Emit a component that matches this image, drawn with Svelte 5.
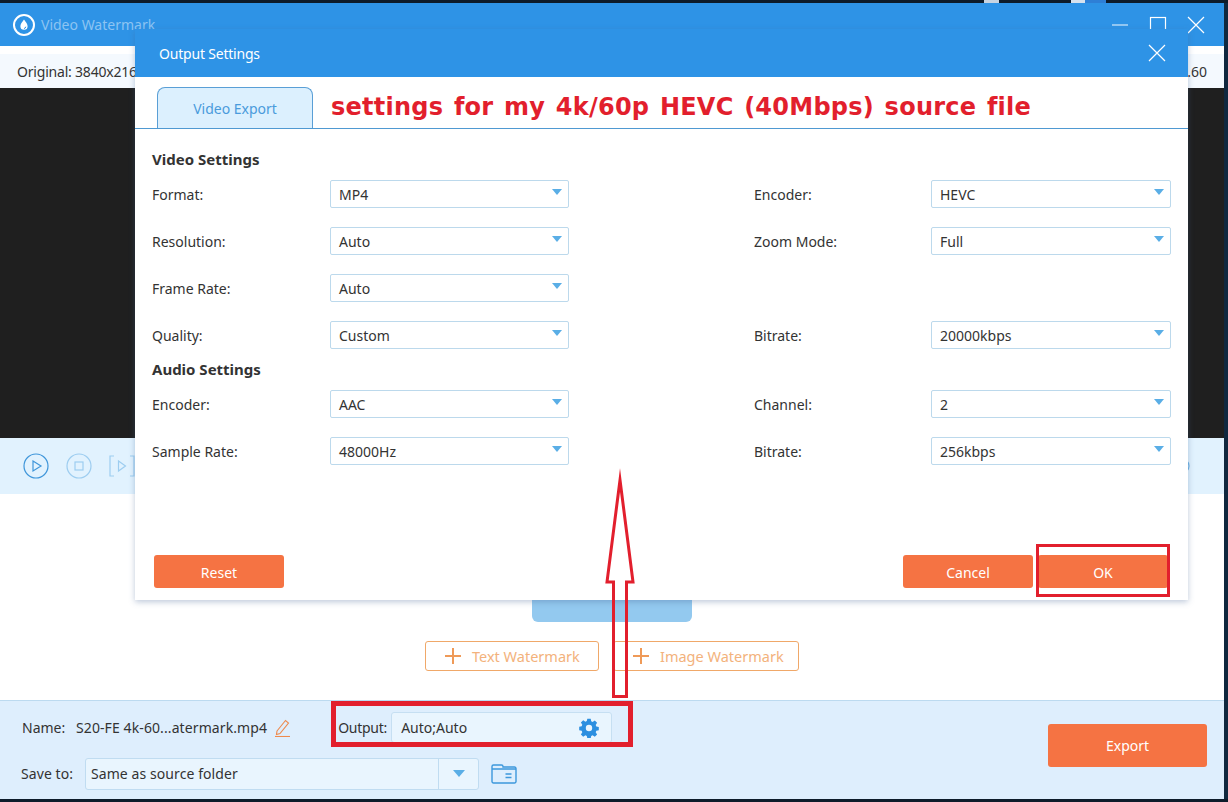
<script>
  const videoRows = [
    { l: 'Format:', v: 'MP4', l2: 'Encoder:', v2: 'HEVC' },
    { l: 'Resolution:', v: 'Auto', l2: 'Zoom Mode:', v2: 'Full' },
    { l: 'Frame Rate:', v: 'Auto' },
    { l: 'Quality:', v: 'Custom', l2: 'Bitrate:', v2: '20000kbps' }
  ];
  const audioRows = [
    { l: 'Encoder:', v: 'AAC', l2: 'Channel:', v2: '2' },
    { l: 'Sample Rate:', v: '48000Hz', l2: 'Bitrate:', v2: '256kbps' }
  ];
</script>

{#snippet row(r)}
  <div class="row">
    <span class="lbl">{r.l}</span>
    <div class="sel"><span>{r.v}</span><i class="tri"></i></div>
    {#if r.l2}
      <span class="lbl second">{r.l2}</span>
      <div class="sel wide"><span>{r.v2}</span><i class="tri"></i></div>
    {/if}
  </div>
{/snippet}

{#snippet plus()}
  <svg class="plus" width="16" height="16" viewBox="0 0 16 16"><path d="M8 0v16M0 8h16" stroke="#ef9a58" stroke-width="2"/></svg>
{/snippet}

<div class="page">
  <div class="strip"><b class="bit a"></b><b class="bit b"></b></div>
  <main class="win">
    <header class="title">
      <svg class="logo" viewBox="0 0 24 24" width="24" height="24" fill="none">
        <circle cx="12" cy="12" r="10" stroke="#fff" stroke-width="2"/>
        <path d="M12 6.5c2 2.7 3.6 4.6 3.6 6.7a3.6 3.6 0 0 1-7.2 0c0-2.1 1.600-4 3.600-6.700z" fill="#fff"/>
        <path d="M12 15.500a2 2 0 0 0 1.800-1.800" stroke="#2e93e6" stroke-width="1"/>
      </svg>
      <span class="appname">Video Watermark</span>
      <div class="winbtns">
        <svg width="18" height="18" viewBox="0 0 18 18"><path d="M1 9h16" stroke="#fff" stroke-width="1.200" opacity=".8"/></svg>
        <svg width="18" height="18" viewBox="0 0 18 18"><rect x="1.500" y="1.500" width="15" height="15" fill="none" stroke="#fff" stroke-width="1.200"/></svg>
        <svg width="18" height="18" viewBox="0 0 18 18"><path d="M1 1l16 16M17 1L1 17" stroke="#fff" stroke-width="1.200"/></svg>
      </div>
    </header>
    <div class="info"><div class="infoin"><span class="orig">Original: 3840x2160</span><span>.60</span></div></div>
    <div class="video"></div>
    <div class="controls">
      <svg width="26" height="26" viewBox="0 0 26 26" fill="none" stroke="#3f96da" stroke-width="1.200"><circle cx="13" cy="13" r="12"/><path d="M10 8l8 5-8 5z"/></svg>
      <svg width="26" height="26" viewBox="0 0 26 26" fill="none" stroke="#9dcdf0" stroke-width="1.200"><circle cx="13" cy="13" r="12"/><rect x="9" y="9" width="8" height="8"/></svg>
      <svg width="26" height="22" viewBox="0 0 26 22" fill="none" stroke="#9dcdf0" stroke-width="1.200"><path d="M5 1H1v20h4M21 1h4v20h-4M9.500 6l7 5-7 5z"/></svg>
      <svg class="vol" width="20" height="20" viewBox="0 0 20 20" fill="none" stroke="#6fb3e6" stroke-width="1.200"><circle cx="10" cy="10" r="8"/></svg>
    </div>
    <div class="canvas">
      <div class="addbar"></div>
      <div class="wmbtns">
        <div class="wm t">{@render plus()}Text Watermark</div>
        <div class="wm i">{@render plus()}Image Watermark</div>
      </div>
    </div>
    <footer class="foot">
      <div class="fleft">
        <div class="fl1">
          <span class="nm">Name:</span><span class="fname">S20-FE 4k-60...atermark.mp4</span>
          <svg class="pen" width="17" height="18" viewBox="0 0 17 18" fill="none" stroke="#ee8a4e" stroke-width="1.100"><path d="M3 12L11.500 1.500l3 2.500L6 14.500l-3.500 1z"/><path d="M1 17.500h15"/></svg>
          <span class="outl">Output:</span>
          <div class="outbox">
            <span>Auto;Auto</span>
            <svg width="20" height="20" viewBox="0 0 20 20"><path fill="#2c8fe0" fill-rule="evenodd" d="M8.300.800h3.400l.5 2.500 1.400.6 2.200-1.400 2.300 2.300-1.400 2.200.6 1.400 2.500.5v3.400l-2.500.5-.6 1.400 1.400 2.200-2.300 2.300-2.200-1.400-1.400.6-.5 2.500H8.300l-.5-2.500-1.400-.6-2.200 1.400-2.300-2.300 1.400-2.200-.6-1.400-2.500-.5V8.700l2.500-.5.6-1.400L1.900 4.600l2.300-2.300 2.200 1.400 1.400-.6zM10 6.800a3.200 3.200 0 1 0 0 6.400 3.200 3.200 0 0 0 0-6.400z"/></svg>
          </div>
        </div>
        <div class="fl2">
          <span class="nm">Save to:</span>
          <div class="savebox"><span>Same as source folder</span><div class="savearrow"><i class="tri big"></i></div></div>
          <svg class="folder" width="26" height="20" viewBox="0 0 26 20" fill="none" stroke="#3d98dc" stroke-width="1.400"><path d="M1 4V2.500A1.500 1.500 0 0 1 2.500 1h8A1.500 1.500 0 0 1 12 2.500V3h11.500A1.500 1.500 0 0 1 25 4.500V17.500a1.500 1.500 0 0 1-1.500 1.500h-21A1.500 1.500 0 0 1 1 17.500z"/><path d="M1 5h24M14.500 10h6M14.500 13.500h6"/></svg>
        </div>
      </div>
      <div class="export">Export</div>
    </footer>
  </main>
  <div class="strip bottom"></div>

  <section class="dialog">
    <header class="dhead">
      <span>Output Settings</span>
      <svg width="18" height="18" viewBox="0 0 18 18"><path d="M1 1l16 16M17 1L1 17" stroke="#fff" stroke-width="1.200"/></svg>
    </header>
    <div class="tabs">
      <div class="tab">Video Export</div>
      <div class="note">settings for my 4k/60p HEVC (40Mbps) source file</div>
    </div>
    <div class="body">
      <h3 class="h1">Video Settings</h3>
      {#each videoRows as r}{@render row(r)}{/each}
      <h3 class="h2">Audio Settings</h3>
      {#each audioRows as r}{@render row(r)}{/each}
    </div>
    <div class="actions">
      <div class="btn">Reset</div>
      <div class="spacer"></div>
      <div class="btn">Cancel</div>
      <div class="btn ok">OK</div>
    </div>
  </section>

  <div class="mark okmark"></div>
  <div class="mark outmark"></div>
  <svg class="arrow" width="40" height="240" viewBox="0 0 40 240" fill="none">
    <path d="M20 16L33 118H26.500V232.500H13.500V118H7z" stroke="#e21f2d" stroke-width="3" stroke-miterlimit="20"/>
  </svg>
</div>

<style>
  :global(body) { margin: 0; background: #0f2a44; }
  .page {
    position: relative; width: 1228px; height: 802px; overflow: hidden;
    display: flex; flex-direction: column;
    font-family: "Noto Sans", "DejaVu Sans", sans-serif; font-size: 14px; color: #333;
    background: #10283f;
  }
  .strip { height: 3px; background: #0d1b2a; position: relative; flex: none; }
  .bit { position: absolute; top: 0; height: 3px; background: #c7d4e2; }
  .bit.a { left: 984px; width: 15px; }
  .bit.b { left: 1071px; width: 35px; background: linear-gradient(90deg, #d7e2ee 40%, #2e7fd6 40%); }
  .win { width: 1224px; flex: 1; display: flex; flex-direction: column; background: #fff; }
  .title { height: 43px; background: #2e93e6; display: flex; align-items: center; padding: 0 19px 0 12px; flex: none; }
  .logo { margin-right: 5px; }
  .appname { color: #8cc4f2; font-size: 14px; }
  .winbtns { margin-left: auto; display: flex; gap: 20px; }
  .info { height: 42px; background: #fff; padding-top: 8px; box-sizing: border-box; flex: none; }
  .infoin { height: 34px; background: #f4f9fe; display: flex; justify-content: space-between; align-items: center; padding: 0 17px; color: #333; }
  .orig { letter-spacing: -.2px; }
  .video { height: 350px; background: #1f1f1f; flex: none; }
  .controls { height: 56px; background: #e1f2fe; display: flex; align-items: center; gap: 17px; padding: 0 33px 0 23px; flex: none; }
  .vol { margin-left: auto; }
  .canvas { flex: 1; background: #fff; display: flex; flex-direction: column; align-items: center; }
  .addbar { width: 160px; height: 128px; background: #93c9ef; border-radius: 0 0 6px 6px; flex: none; }
  .wmbtns { display: flex; gap: 14px; margin-top: 19px; }
  .wm { height: 28px; border: 1px solid #f0a869; border-radius: 3px; display: flex; align-items: center; color: #f3b27c; font-size: 14.500px; }
  .wm.t { width: 172px; }
  .wm.i { width: 184px; }
  .plus { margin: 0 11px 0 19px; flex: none; }
  .foot { height: 99px; background: #deeefd; border-top: 1px solid #bcdaf0; display: flex; box-sizing: border-box; flex: none; }
  .fleft { flex: 1; padding: 10px 0 0 21px; }
  .fl1 { display: flex; align-items: center; height: 33px; }
  .fl2 { display: flex; align-items: center; height: 33px; margin-top: 13px; letter-spacing: .08px; }
  .nm { width: 55px; }
  .fl1 .nm { margin-left: 1px; width: 54px; }
  .fname { margin-right: 7px; letter-spacing: .1px; }
  .pen { margin-right: 47px; flex: none; }
  .outl { width: 48px; margin-right: 5px; letter-spacing: -.25px; white-space: nowrap; }
  .outbox { width: 221px; height: 31px; border: 1px solid #c6dff2; border-radius: 3px; background: #e9f5fe; display: flex; align-items: center; justify-content: space-between; padding: 0 12px 0 9px; box-sizing: border-box; flex: none; }
  .savebox { width: 394px; height: 32px; margin-left: 9px; border: 1px solid #c0dcf1; border-radius: 3px; background: #e9f5fe; display: flex; align-items: center; padding-left: 5px; box-sizing: border-box; justify-content: space-between; }
  .savearrow { width: 39px; height: 100%; border-left: 1px solid #c0dcf1; display: flex; align-items: center; justify-content: center; }
  .folder { margin-left: 12px; }
  .export { width: 159px; height: 43px; background: #f57343; color: #fff; border-radius: 3px; display: flex; align-items: center; justify-content: center; margin: 23px 17px 0 0; }
  .dialog {
    position: absolute; left: 135px; top: 29px; width: 1053px; height: 571px;
    background: #fff; box-shadow: 0 2px 6px rgba(70,100,150,.35);
    display: flex; flex-direction: column;
  }
  .dhead { height: 48px; background: #2e93e6; color: #fff; display: flex; align-items: center; justify-content: space-between; padding: 0 22px 0 24px; flex: none; letter-spacing: -.2px; }
  .tabs { height: 52px; border-bottom: 1px solid #4f99d2; display: flex; align-items: flex-end; padding-left: 22px; box-sizing: border-box; flex: none; }
  .tab { width: 156px; height: 41px; box-sizing: border-box; border: 1px solid #5a9fd6; border-bottom: none; border-radius: 8px 8px 0 0; background: #dcf0fe; color: #4a9bdc; display: flex; align-items: center; justify-content: center; }
  .note { font-family: "DejaVu Sans", sans-serif; font-weight: 700; font-size: 24px; color: #e21f2d; margin: 0 0 7px 18px; white-space: nowrap; word-spacing: 2px; letter-spacing: .25px; }
  .body { padding: 20px 17px 0; flex: none; }
  h3 { margin: 0; font-size: 15px; font-weight: 700; color: #333; line-height: 20px; }
  .h1 { margin-bottom: 11px; }
  .h2 { margin-top: -9px; margin-bottom: 11px; }
  .row { display: flex; align-items: center; height: 28px; margin-bottom: 19px; }
  .row:last-child { margin-bottom: 0; }
  .lbl { width: 178px; flex: none; }
  .lbl.second { width: 177px; margin-left: 185px; }
  .sel { width: 239px; height: 28px; box-sizing: border-box; border: 1px solid #bcd9ec; border-radius: 2px; display: flex; justify-content: space-between; padding: 0 6px 0 8px; align-items: center; flex: none; }
  .sel.wide { width: 240px; }
  .tri { width: 0; height: 0; border-left: 5.500px solid transparent; border-right: 5.500px solid transparent; border-top: 6px solid #5aaee6; margin-top: -4px; }
  .tri.big { margin-top: 0; border-left-width: 6.500px; border-right-width: 6.500px; border-top-width: 7px; }
  .actions { margin-top: auto; height: 33px; padding: 0 20px 12px 19px; display: flex; gap: 5px; flex: none; }
  .spacer { flex: 1; }
  .btn { width: 130px; height: 33px; background: #f57343; color: #fff; border-radius: 3px; display: flex; align-items: center; justify-content: center; padding-top: 1px; box-sizing: border-box; }
  .mark { position: absolute; box-sizing: border-box; border-style: solid; border-color: #e21f2d; }
  .okmark { left: 1036px; top: 544px; width: 134px; height: 53px; border-width: 3px; }
  .outmark { left: 331px; top: 701px; width: 302px; height: 46px; border-width: 5px; }
  .arrow { position: absolute; left: 600px; top: 464px; }
</style>
